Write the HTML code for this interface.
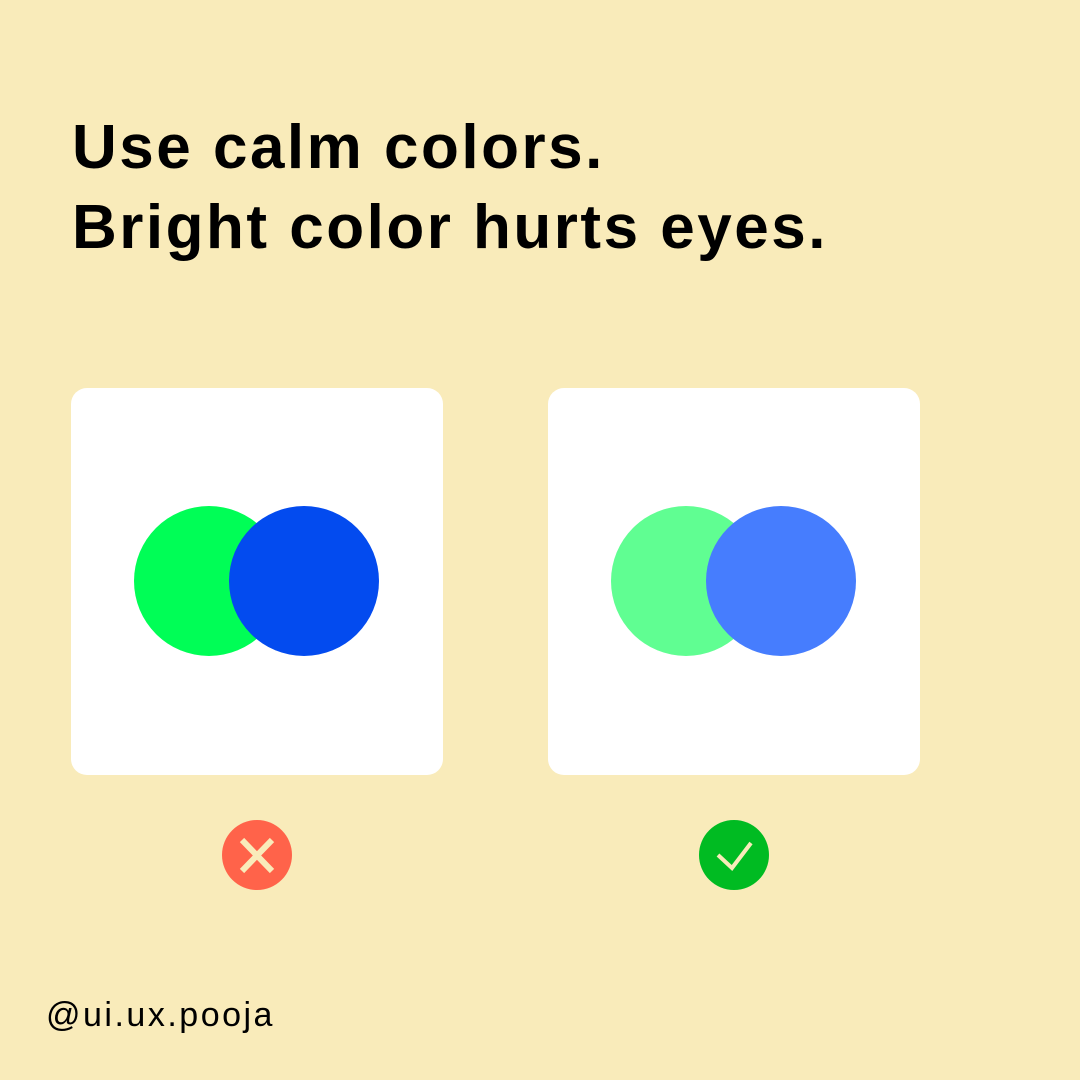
<!DOCTYPE html>
<html><head><style>
body{margin:0;width:1080px;height:1080px;background:#f9ebba;position:relative;overflow:hidden;font-family:"Liberation Sans",sans-serif}
.t{position:absolute;left:72px;font-size:62px;font-weight:bold;color:#000;letter-spacing:2.5px;white-space:nowrap;line-height:1}
.card{position:absolute;top:388px;width:372px;height:387px;background:#fff;border-radius:16px}
.c{position:absolute;width:150px;height:150px;border-radius:50%;top:506px}
.h{position:absolute;left:46px;top:996px;font-size:34px;color:#000;font-family:"Liberation Sans",sans-serif;letter-spacing:2.5px}
</style></head><body>
<div class="t" style="top:117px">Use calm colors.</div>
<div class="t" style="top:197px">Bright color hurts eyes.</div>
<div class="card" style="left:71px"></div>
<div class="card" style="left:548px"></div>
<div class="c" style="left:134px;background:#00fe56"></div>
<div class="c" style="left:229px;background:#034bef"></div>
<div class="c" style="left:611px;background:#60fe92"></div>
<div class="c" style="left:706px;background:#467dfe"></div>
<svg style="position:absolute;left:222px;top:820px" width="70" height="70" viewBox="0 0 70 70"><circle cx="35" cy="35" r="35" fill="#ff634a"/><path d="M20 20L50 51M50 20L20 51" stroke="#f9ebba" stroke-width="6"/></svg>
<svg style="position:absolute;left:699px;top:820px" width="70" height="70" viewBox="0 0 70 70"><circle cx="35" cy="35" r="35" fill="#00bb22"/><path d="M19 35L33 48L52 23" stroke="#f9ebba" stroke-width="4" fill="none"/></svg>
<div class="h">@ui.ux.pooja</div>
</body></html>
